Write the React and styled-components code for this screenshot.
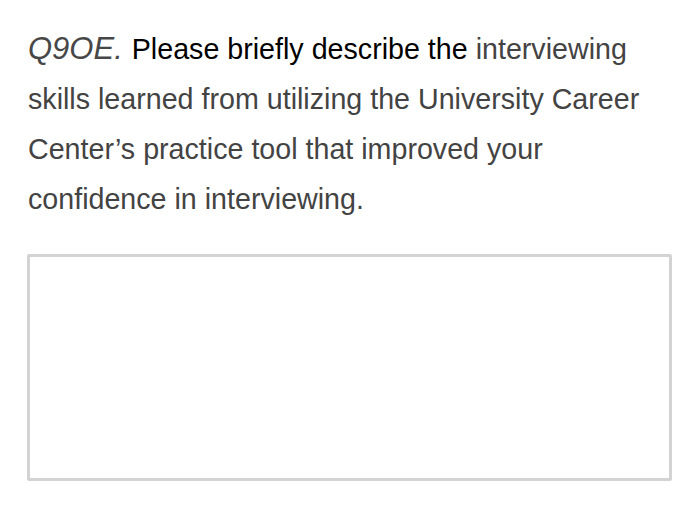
import React from "react";
import styled, { createGlobalStyle } from "styled-components";

const Global = createGlobalStyle`
  html, body { margin: 0; padding: 0; background: #fff; }
  body { font-family: "Liberation Sans", Arial, sans-serif; }
`;

const Page = styled.div`
  width: 700px;
  height: 508px;
  box-sizing: border-box;
  padding: 24px 28px 0 27px;
  background: #fff;
`;

const Question = styled.div`
  font-size: 28.65px;
  line-height: 50px;
  color: #434343;
  padding-left: 1px;
`;

const Label = styled.span`
  font-style: italic;
  font-size: 31px;
  color: #474747;
  margin-right: 9px;
`;

const Strong = styled.span`
  color: #000;
`;

const Answer = styled.textarea`
  display: block;
  box-sizing: border-box;
  width: 645px;
  height: 227px;
  margin-top: 30px;
  border: 3px solid #d3d3d3;
  border-radius: 2px;
  resize: none;
  outline: none;
  background: #fff;
  font-family: inherit;
`;

export default function App() {
  return (
    <>
      <Global />
      <Page>
        <Question>
          <Label>Q9OE.</Label>
          <Strong>Please briefly describe the</Strong> interviewing skills learned from utilizing the University Career Center’s practice tool that improved your confidence in interviewing.
        </Question>
        <Answer />
      </Page>
    </>
  );
}
